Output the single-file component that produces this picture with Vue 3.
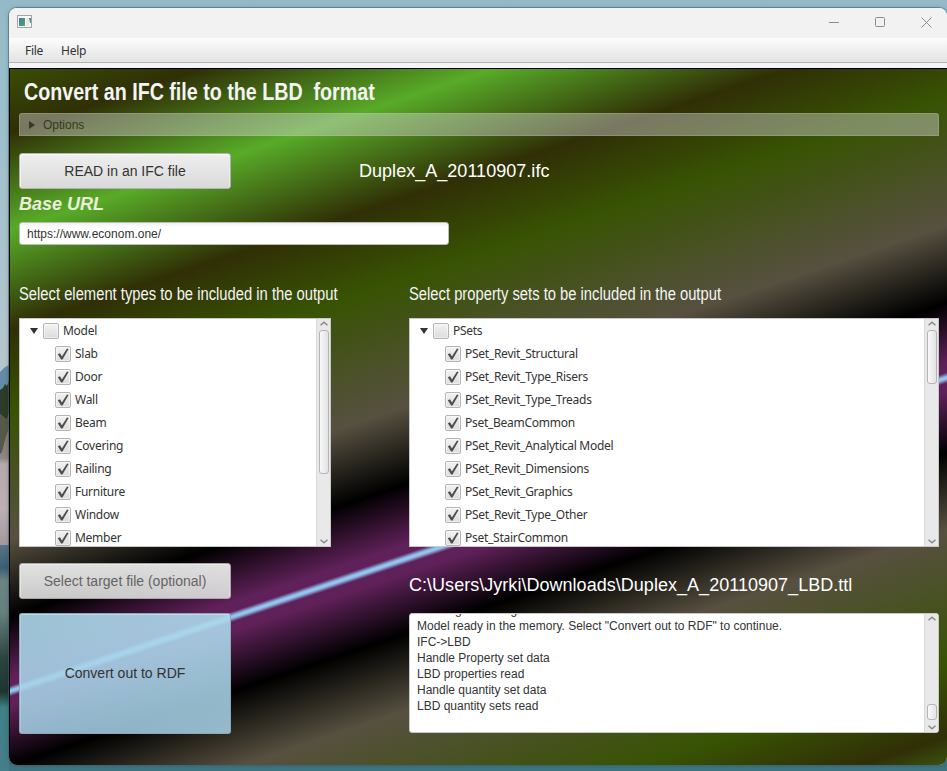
<script setup>
const elementTypes = ['Slab', 'Door', 'Wall', 'Beam', 'Covering', 'Railing', 'Furniture', 'Window', 'Member']
const propertySets = [
  'PSet_Revit_Structural',
  'PSet_Revit_Type_Risers',
  'PSet_Revit_Type_Treads',
  'Pset_BeamCommon',
  'PSet_Revit_Analytical Model',
  'PSet_Revit_Dimensions',
  'PSet_Revit_Graphics',
  'PSet_Revit_Type_Other',
  'Pset_StairCommon',
]
const trees = [
  { id: 'elements', root: 'Model', items: elementTypes },
  { id: 'psets', root: 'PSets', items: propertySets },
]
const log = [
  'Reading the config',
  'Model ready in the memory. Select "Convert out to RDF" to continue.',
  'IFC->LBD',
  'Handle Property set data',
  'LBD properties read',
  'Handle quantity set data',
  'LBD quantity sets read',
]
</script>

<template>
  <div class="desktop">
    <svg class="scenery" width="9" height="431" viewBox="0 0 9 431" preserveAspectRatio="none">
      <defs>
        <linearGradient id="shore" x1="0" y1="0" x2="0" y2="1">
          <stop offset="0" stop-color="#6b6b62" />
          <stop offset=".25" stop-color="#857b73" />
          <stop offset=".4" stop-color="#8f8582" />
          <stop offset=".44" stop-color="#b5a9ad" />
          <stop offset=".75" stop-color="#bcb0b4" />
          <stop offset="1" stop-color="#a2999f" />
        </linearGradient>
        <linearGradient id="water" x1="0" y1="0" x2="0" y2="1">
          <stop offset="0" stop-color="#55748a" />
          <stop offset=".1" stop-color="#3d5d74" />
          <stop offset=".16" stop-color="#6c8583" />
          <stop offset=".3" stop-color="#66807f" />
          <stop offset=".5" stop-color="#2c453f" />
          <stop offset=".65" stop-color="#1d3531" />
          <stop offset=".72" stop-color="#3f8087" />
          <stop offset="1" stop-color="#457e8b" />
        </linearGradient>
      </defs>
      <path d="M0 32L5 27L9 25V60H0Z" fill="#628ba5" />
      <rect y="60" width="9" height="145" fill="url(#shore)" />
      <path d="M0 50L3 48L5 44L7 46L9 40V72L7 80L0 74Z" fill="#2c3c2b" />
      <path d="M0 74L5 78L9 80V88L6 96L4 104L2 112L0 114Z" fill="#55594a" />
      <rect y="205" width="9" height="226" fill="url(#water)" />
    </svg>

    <div class="window">
      <header class="titlebar">
        <svg class="app-icon" width="15" height="13" viewBox="0 0 15 13">
          <defs>
            <linearGradient id="icon-fill" x1="0" y1="0" x2="1" y2="1">
              <stop offset="0" stop-color="#4a78a8" />
              <stop offset="1" stop-color="#4aa86c" />
            </linearGradient>
          </defs>
          <rect x=".5" y=".5" width="14" height="12" fill="#fafafa" stroke="#a0a6a8" />
          <rect x="2" y="3" width="6" height="8" fill="url(#icon-fill)" />
          <rect x="9" y="3" width="3" height="8" fill="#e6e8ea" />
          <path d="M12 3h2v5h-1z" fill="url(#icon-fill)" />
        </svg>
        <div class="controls">
          <svg width="11" height="11" viewBox="0 0 11 11"><path d="M0 5.500h10" /></svg>
          <svg width="11" height="11" viewBox="0 0 11 11"><rect x=".5" y=".5" width="9" height="9" rx="1" /></svg>
          <svg width="11" height="11" viewBox="0 0 11 11"><path d="M.5 .5l10 10M10.500 .5l-10 10" /></svg>
        </div>
      </header>
      <nav class="menubar">
        <span>File</span>
        <span>Help</span>
      </nav>

      <main class="content">
        <h1>Convert an IFC file to the LBD&nbsp; format</h1>
        <div class="options">
          <svg width="6" height="8" viewBox="0 0 6 8"><path d="M0 0L6 4L0 8Z" fill="#353a24" /></svg>
          <span>Options</span>
        </div>
        <div class="read-row">
          <button class="btn">READ in an IFC file</button>
          <span class="file-name">Duplex_A_20110907.ifc</span>
        </div>
        <h2>Base URL</h2>
        <input class="url" type="text" value="https://www.econom.one/" />

        <div class="columns headings">
          <p><span>Select element types to be included in the output</span></p>
          <p><span>Select property sets to be included in the output</span></p>
        </div>
        <div class="columns">
          <section v-for="tree in trees" :key="tree.id" class="tree" :class="tree.id">
            <div class="rows">
              <div class="row root">
                <svg width="8" height="6" viewBox="0 0 8 6"><path d="M0 0H8L4 6Z" fill="#333" /></svg>
                <i class="box"></i>
                <span>{{ tree.root }}</span>
              </div>
              <div v-for="item in tree.items" :key="item" class="row">
                <i class="box">
                  <svg width="12" height="12" viewBox="0 0 12 12">
                    <path d="M.8 6.200L3 5.300L4.900 8.500L10 .5L11.600 .9L5.500 11.500H4.100Z" fill="#4d4d4d" />
                  </svg>
                </i>
                <span>{{ item }}</span>
              </div>
            </div>
            <div class="scroll">
              <svg width="8" height="5" viewBox="0 0 8 5"><path d="M.5 4.300L4 1.200L7.500 4.300" /></svg>
              <i class="thumb"></i>
              <svg class="down" width="8" height="5" viewBox="0 0 8 5"><path d="M.5 .7L4 3.800L7.500 .7" /></svg>
            </div>
          </section>
        </div>

        <div class="columns bottom">
          <div class="actions">
            <button class="btn faded">Select target file (optional)</button>
            <button class="btn convert">Convert out to RDF</button>
          </div>
          <div class="output">
            <p class="target">C:\Users\Jyrki\Downloads\Duplex_A_20110907_LBD.ttl</p>
            <div class="log">
              <div class="lines">
                <div v-for="line in log" :key="line">{{ line }}</div>
              </div>
              <div class="scroll">
                <svg width="8" height="5" viewBox="0 0 8 5"><path d="M.5 4.300L4 1.200L7.500 4.300" /></svg>
                <i class="thumb"></i>
                <svg class="down" width="8" height="5" viewBox="0 0 8 5"><path d="M.5 .7L4 3.800L7.500 .7" /></svg>
              </div>
            </div>
          </div>
        </div>
      </main>
    </div>
  </div>
</template>

<style>
body {
  margin: 0;
  overflow: hidden;
}
</style>

<style scoped>
* {
  box-sizing: border-box;
}
p, h1, h2 {
  margin: 0;
}
.desktop {
  position: relative;
  width: 947px;
  height: 771px;
  padding: 8px 0 0 9px;
  overflow: hidden;
  font-family: "Liberation Sans", Arial, sans-serif;
  background: linear-gradient(#94bac9 0, #9bbfcc 120px, #a9c3cd 240px, #b4c7cd 370px, #3e7480 600px, #3e7480 100%);
}
.scenery {
  position: absolute;
  left: 0;
  top: 340px;
}
.window {
  position: relative;
  width: 938px;
  height: 757px;
  border-radius: 8px;
  overflow: hidden;
  background: #f4f4f4;
  box-shadow: 0 0 0 1px rgba(70, 95, 105, .55), 0 0 5px rgba(0, 0, 0, .2);
}
.titlebar {
  display: flex;
  justify-content: space-between;
  height: 30px;
  padding: 7px 15px 0 8px;
  background: #f2f2f2;
}
.controls {
  display: flex;
  gap: 35px;
  padding-top: 2px;
}
.controls svg {
  fill: none;
  stroke: #8c8c8c;
}
.menubar {
  display: flex;
  gap: 18px;
  height: 25px;
  padding-left: 16px;
  border-bottom: 1px solid #b5b5b5;
  background: linear-gradient(#fcfcfc, #e3e3e3);
  font: 12px/25px "Noto Sans", sans-serif;
  letter-spacing: -.27px;
  color: #333;
}
.content {
  height: 697px;
  margin-top: 5px;
  padding: 8px 8px 0 9px;
  border-top: 1px solid #000;
  border-left: 1px solid #000;
  background: linear-gradient(161.500deg,
    #394d04 0, #302f06 60px, #58ab28 153px, #302f06 247px, #385303 324px,
    #575040 446px, #000 519px, #60215a 577px, #60215a 585px, #92c4f0 589px,
    #92c4f0 591px, #60215a 595px, #60215a 603px, #000 661px, #575040 734px,
    #385303 861px, #302f06 930px, #58ab28 1026px);
}
h1 {
  height: 36px;
  padding-left: 5px;
  font-size: 23px;
  line-height: 30px;
  color: #f4f4f4;
  white-space: nowrap;
  transform: scaleX(.855);
  transform-origin: 5px 0;
}
.options {
  display: flex;
  align-items: center;
  gap: 8px;
  height: 23px;
  padding-left: 9px;
  border: 1px solid rgba(190, 200, 160, .28);
  border-radius: 3px 3px 0 0;
  background: rgba(221, 221, 221, .42);
  font-size: 12px;
  color: #353a20;
}
.read-row {
  display: flex;
  align-items: center;
  gap: 128px;
  margin-top: 17px;
}
.btn {
  width: 212px;
  height: 36px;
  padding: 0;
  border: 1px solid #b2b2b2;
  border-radius: 3px;
  background: linear-gradient(#efefef, #d9d9d9);
  box-shadow: inset 0 1px #fafafa, inset 1px 0 #f4f4f4, inset -1px 0 #eaeaea;
  font: 14px "Liberation Sans", Arial, sans-serif;
  color: #333;
}
.file-name, .target {
  font-size: 18px;
  letter-spacing: .03px;
  color: #fff;
  white-space: nowrap;
}
h2 {
  height: 33px;
  font-size: 18px;
  font-style: italic;
  line-height: 30px;
  color: #e8eedb;
}
.url {
  display: block;
  width: 430px;
  height: 23px;
  padding: 0 7px;
  border: 1px solid #bcbcbc;
  border-radius: 3px;
  background: linear-gradient(#f0f0f0, #fff 4px);
  font: 12px "Liberation Sans", Arial, sans-serif;
  color: #333;
}
.columns {
  display: grid;
  grid-template-columns: 312px 530px;
  column-gap: 78px;
}
.headings {
  height: 73px;
  padding-top: 39px;
  font-size: 17.500px;
  line-height: 20px;
  color: #f4f4f4;
  white-space: nowrap;
}
.headings span {
  display: inline-block;
  transform: scaleX(.844);
  transform-origin: 0 0;
}
.tree {
  display: flex;
  height: 229px;
  border: 1px solid #c8c8c8;
  background: #fff;
  overflow: hidden;
}
.rows {
  flex: 1;
  overflow: hidden;
}
.row {
  display: flex;
  align-items: center;
  gap: 4px;
  height: 23px;
  padding-left: 35px;
  font: 12px "Noto Sans", sans-serif;
  letter-spacing: -.27px;
  color: #333;
}
.row.root {
  padding-left: 10px;
}
.root .box {
  margin-left: 1px;
}
.box {
  display: flex;
  align-items: center;
  justify-content: center;
  width: 16px;
  height: 16px;
  margin-top: 1px;
  border: 1px solid #b4b4b4;
  border-radius: 2px;
  background: linear-gradient(#f2f2f2, #dcdcdc);
  box-shadow: inset 0 0 0 1px rgba(255, 255, 255, .5);
}
.scroll {
  display: flex;
  flex-direction: column;
  align-items: center;
  width: 14px;
  padding: 2px 0;
  border-left: 1px solid #dadada;
  background: #e9e9e9;
}
.scroll svg {
  flex: none;
  fill: none;
  stroke: #888;
  stroke-width: 1.400;
}
.scroll .down {
  margin-top: auto;
}
.thumb {
  width: 10px;
  height: 144px;
  margin-top: 4px;
  border: 1px solid #b4b4b4;
  border-radius: 3px;
  background: linear-gradient(90deg, #f8f8f8, #e2e2e2);
}
.psets .thumb {
  height: 54px;
}
.bottom {
  margin-top: 16px;
}
.actions {
  display: flex;
  flex-direction: column;
  gap: 14px;
}
.faded {
  opacity: .93;
  color: #6b6b6b;
}
.convert {
  height: 121px;
  padding-bottom: 2px;
  border-color: rgba(140, 165, 178, .95);
  background: linear-gradient(rgba(173, 216, 235, .9), rgba(163, 207, 228, .87));
  box-shadow: inset 0 1px rgba(220, 240, 248, .5), inset 1px 0 rgba(220, 240, 248, .3);
}
.target {
  height: 50px;
  line-height: 44px;
}
.log {
  display: flex;
  height: 120px;
  border: 1px solid #c8c8c8;
  border-radius: 3px;
  background: #fff;
  overflow: hidden;
}
.lines {
  flex: 1;
  margin-top: -12px;
  padding-left: 7px;
  font-size: 12px;
  line-height: 16px;
  color: #333;
}
.log .thumb {
  height: 16px;
  margin-top: 83px;
}
</style>
